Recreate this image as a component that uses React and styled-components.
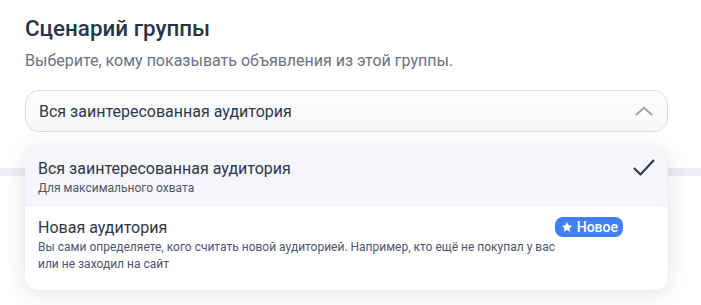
import React from "react";
import styled, { createGlobalStyle } from "styled-components";

const Global = createGlobalStyle`
  html, body { margin: 0; padding: 0; background: #ffffff; }
  body { font-family: Roboto, "Noto Sans", Arial, sans-serif; -webkit-font-smoothing: antialiased; }
`;

const Page = styled.div`
  width: 701px;
  height: 305px;
  overflow: hidden;
  box-sizing: border-box;
  padding: 13px 33px 0 25px;
  background: #ffffff;
`;

const Title = styled.h2`
  margin: 0;
  font-size: 22.4px;
  line-height: 30px;
  font-weight: 500;
  color: #28324a;
`;

const Subtitle = styled.p`
  margin: 8px 0 0;
  font-size: 16px;
  line-height: 20px;
  color: #6a7284;
`;

const SelectWrap = styled.div`
  position: relative;
  margin-top: 19px;
`;

const SelectBox = styled.div`
  height: 42px;
  box-sizing: border-box;
  border: 1px solid #d9dce8;
  border-radius: 14px;
  display: flex;
  align-items: center;
  justify-content: space-between;
  padding: 0 14px 0 13px;
  font-size: 16px;
  color: #2f3749;
  background: linear-gradient(#fdfdfe, #f7f8fa);
`;

const Band = styled.div`
  margin: 36px -33px 0 -25px;
  height: 8px;
  background: #eceef3;
`;

const Menu = styled.div`
  position: absolute;
  left: 0;
  right: 0;
  top: 56px;
  background: #ffffff;
  border-radius: 14px;
  box-shadow: 0 4px 24px rgba(40, 50, 80, 0.12), 0 0 2px rgba(40, 50, 80, 0.06);
  overflow: hidden;
`;

const Option = styled.div`
  display: flex;
  align-items: flex-start;
  justify-content: space-between;
  padding: ${(p) => (p.$selected ? "13px 13px 10px 13px" : "11px 45px 17px 13px")};
  background: ${(p) => (p.$selected ? "#f5f6fa" : "#ffffff")};
`;

const OptionText = styled.div`
  flex: 1;
  display: flex;
  flex-direction: column;
  gap: 1px;
`;

const OptionHead = styled.div`
  display: flex;
  align-items: flex-start;
  justify-content: space-between;
`;

const OptionTitle = styled.div`
  font-size: 16px;
  line-height: 20px;
  color: #2f3749;
`;

const OptionDesc = styled.div`
  font-size: 12px;
  line-height: 17px;
  color: #4e566a;
  max-width: 530px;
`;

const Badge = styled.span`
  display: inline-flex;
  align-items: center;
  gap: 4px;
  height: 20px;
  padding: 0 5px 0 6px;
  border-radius: 8px;
  background: #3f80f5;
  color: #ffffff;
  font-size: 14px;
  font-weight: 500;
  margin-top: -1px;
  flex-shrink: 0;
`;

const Chevron = () => (
  <svg width="18" height="10" viewBox="0 0 18 10" fill="none">
    <path d="M1.5 8.5L9 1.8L16.5 8.5" stroke="#9aa1b4" strokeWidth="2" strokeLinecap="round" strokeLinejoin="round" />
  </svg>
);

const Check = () => (
  <svg width="22" height="18" viewBox="0 0 22 18" fill="none">
    <path d="M1.5 9.5L7.5 15.5L20.5 1.5" stroke="#2b3347" strokeWidth="2" strokeLinecap="round" strokeLinejoin="round" />
  </svg>
);

const Star = () => (
  <svg width="12" height="12" viewBox="0 0 24 24" fill="#ffffff">
    <path d="M12 1.8l3.1 6.6 7.2.9-5.3 5 1.4 7.1L12 17.9l-6.4 3.5 1.4-7.1-5.3-5 7.2-.9z" />
  </svg>
);

export default function App() {
  return (
    <>
      <Global />
      <Page>
        <Title>Сценарий группы</Title>
        <Subtitle>Выберите, кому показывать объявления из этой группы.</Subtitle>
        <SelectWrap>
          <SelectBox>
            <span>Вся заинтересованная аудитория</span>
            <Chevron />
          </SelectBox>
          <Band />
          <Menu>
            <Option $selected>
              <OptionText>
                <OptionTitle>Вся заинтересованная аудитория</OptionTitle>
                <OptionDesc>Для максимального охвата</OptionDesc>
              </OptionText>
              <Check />
            </Option>
            <Option>
              <OptionText>
                <OptionHead>
                  <OptionTitle>Новая аудитория</OptionTitle>
                  <Badge>
                    <Star />
                    Новое
                  </Badge>
                </OptionHead>
                <OptionDesc>
                  Вы сами определяете, кого считать новой аудиторией. Например, кто ещё не покупал у вас или не заходил на сайт
                </OptionDesc>
              </OptionText>
            </Option>
          </Menu>
        </SelectWrap>
      </Page>
    </>
  );
}
